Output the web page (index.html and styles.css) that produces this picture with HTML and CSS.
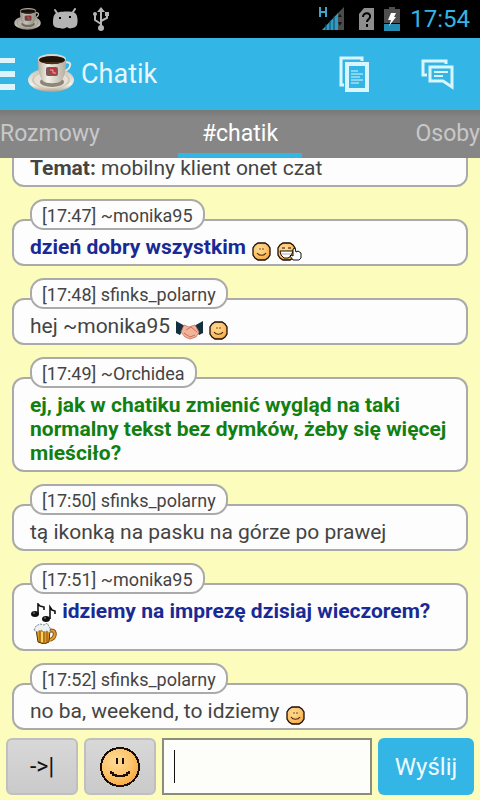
FILE: index.html
```html
<!DOCTYPE html>
<html lang="pl">
<head>
  <meta charset="utf-8">
  <meta name="viewport" content="width=device-width, initial-scale=1">
  <title>Chatik</title>
  <link rel="stylesheet" href="styles.css">
</head>
<body>
  <!-- Shared icons -->
  <svg class="sprite" width="0" height="0" aria-hidden="true">
    <defs>
      <radialGradient id="faceFill" cx="40%" cy="35%" r="70%">
        <stop offset="0" stop-color="#ffdc96"/>
        <stop offset="0.6" stop-color="#fdc36a"/>
        <stop offset="1" stop-color="#f5a43c"/>
      </radialGradient>
      <linearGradient id="cupFill">
        <stop offset="0" stop-color="#b9b2a4"/>
        <stop offset="0.35" stop-color="#f4f1e8"/>
        <stop offset="1" stop-color="#b4ac9e"/>
      </linearGradient>
      <linearGradient id="saucerFill" x2="0" y2="1">
        <stop offset="0" stop-color="#c8c0b2"/>
        <stop offset="0.7" stop-color="#f4f1e8"/>
        <stop offset="1" stop-color="#a89f90"/>
      </linearGradient>
    </defs>
    <symbol id="cup" viewBox="0 0 46 40">
      <ellipse cx="23" cy="26" rx="23" ry="12" fill="url(#saucerFill)"/>
      <ellipse cx="23" cy="26" rx="19" ry="9" fill="#cfc8b9"/>
      <ellipse cx="23" cy="26" rx="17" ry="8" fill="#e6e1d5"/>
      <ellipse cx="24" cy="28" rx="12" ry="5" fill="#8f8677"/>
      <path d="M36 9c4-2 7 0 6 3s-4 5-8 5" fill="none" stroke="#e9e4da" stroke-width="2"/>
      <path d="M10 6c0 9 1 17 5 21 3 3 15 3 18 0 4-4 5-12 5-21z" fill="url(#cupFill)"/>
      <ellipse cx="24" cy="5" rx="14" ry="5" fill="#dcd7cb"/>
      <ellipse cx="24" cy="6" rx="13" ry="4" fill="#1f130c"/>
      <path d="M14 8c5 3 15 3 20 0-5 0-15 0-20 0z" fill="#4b301e"/>
      <rect x="18" y="13" width="12" height="9" rx="2" fill="#7d5a58"/>
      <path d="M21 14h7l1 5-4 2-4-3z" fill="#c4323c"/>
      <path d="M22 16h3v3h3" fill="none" stroke="#d8b0a8"/>
    </symbol>
    <symbol id="smile" viewBox="0 0 40 40">
      <circle cx="20" cy="20" r="19" fill="url(#faceFill)" stroke="#1c0d05" stroke-width="2" shape-rendering="crispEdges"/>
      <path d="M16 11h2v6h-2zM22 11h2v6h-2z" fill="#1c0d05"/>
      <path d="M11 24v2h2v2h3v1h8v-1h3v-2h2v-2" fill="none" stroke="#1c0d05" stroke-width="2"/>
    </symbol>
    <symbol id="smileSmall" viewBox="0 0 19 19">
      <path d="M6 1h7l3 2 2 3v7l-2 3-3 2H6l-3-2-2-3V6l2-3z" fill="url(#faceFill)" stroke="#1c0d05" stroke-width="1.3"/>
      <path d="M8 6v2M11 6v2" stroke="#7a4a1c" stroke-width="1"/>
      <path d="M5 11c2 3 7 3 9 0" fill="none" stroke="#4d2a0e" stroke-width="1.2"/>
    </symbol>
  </svg>

  <div class="app">
    <div class="status-bar">
      <div class="status-group">
        <svg class="status-cup" width="27" height="23"><use href="#cup"/></svg>
        <svg width="28" height="22" viewBox="0 0 28 22">
          <path d="M4 2l4 6M24 1l-4 6" stroke="#b4b4b4" stroke-width="2" stroke-linecap="round"/>
          <path d="M4 6c3-3 17-3 20-1 3 2 3 9 2 12-1 2-3 3-5 3-2 1-4 0-5-1-2 2-6 2-7 1-4 0-7-1-7-5 0-3 0-7 2-9z" fill="#b4b4b4"/>
          <path d="M8 9h2v2H8zM18 8h2v2h-2z" fill="#000"/>
        </svg>
        <svg width="30" height="24" viewBox="0 0 30 24">
          <path d="M12 21V4M12 17l-6-4V7M12 14l6-3V7" fill="none" stroke="#b4b4b4" stroke-width="2"/>
          <path d="M12 0l4 5H8z" fill="#b4b4b4"/>
          <circle cx="12" cy="21" r="3" fill="#b4b4b4"/>
          <circle cx="6" cy="7" r="2" fill="#b4b4b4"/>
          <path d="M16 5h4v4h-4z" fill="#b4b4b4"/>
        </svg>
      </div>
      <div class="status-group">
        <svg width="30" height="24" viewBox="0 0 30 24">
          <path d="M1 0v10M7 0v10M1 5h6" fill="none" stroke="#3ba5cc" stroke-width="2"/>
          <path d="M25 0v23H18V7z" fill="#4c4c4c"/>
          <path d="M3 23L19 6v17z" fill="#2f9cc6"/>
          <path d="M7 17v6M11 13v10M15 9v14" stroke="#0b4258"/>
          <path d="M21 7l-2 3h4zM21 19l-2-4h4z" fill="#181818"/>
        </svg>
        <svg width="15" height="22" viewBox="0 0 15 22">
          <path d="M5 0h10v22H0V6z" fill="#8e8e8e"/>
          <path d="M4 9c0-5 8-5 7 0 0 2-3 2-3 5M8 16v3" fill="none" stroke="#000" stroke-width="2"/>
        </svg>
        <svg width="16" height="24" viewBox="0 0 16 24">
          <path d="M5 0h6v2h5v14H0V2h5z" fill="#4f4f4f"/>
          <path d="M0 17h16v7H0z" fill="#268bb2"/>
          <path d="M7 6h5l-2 4h2l-7 9 2-6H4z" fill="#fff"/>
        </svg>
        <span class="clock">17:54</span>
      </div>
    </div>

    <header class="action-bar">
      <button class="menu-btn" aria-label="Menu">
        <svg width="15" height="34" viewBox="0 0 15 34"><path d="M0 1h15v5H0zM0 14h15v6H0zM0 27h15v6H0z" fill="#dff3fb"/></svg>
      </button>
      <svg class="logo" width="46" height="40"><use href="#cup"/></svg>
      <h1>Chatik</h1>
      <button class="icon-btn" aria-label="Kopiuj">
        <svg width="30" height="36" viewBox="0 0 30 36" fill="none" stroke="#d9f5fd">
          <path d="M5 29H2V2h21v3" stroke-width="3"/>
          <path d="M8 8h20v26H8z" stroke-width="4"/>
          <path d="M12 15h7M12 18h12M12 21h9M12 24h12M12 27h8" stroke-width="1"/>
        </svg>
      </button>
      <button class="icon-btn" aria-label="Dymki">
        <svg width="34" height="31" viewBox="0 0 34 31" fill="none" stroke="#d9f5fd">
          <path d="M6 16H2V2h23v3" stroke-width="3"/>
          <path d="M9 8h22v20l-9-6H9z" stroke-width="3"/>
          <path d="M13 13h14M13 17h9" stroke-width="2"/>
        </svg>
      </button>
    </header>

    <nav class="tabs">
      <a class="tab" href="#rozmowy">Rozmowy</a>
      <a class="tab active" href="#chatik">#chatik</a>
      <a class="tab last" href="#osoby">Osoby</a>
    </nav>

    <main class="chat">
      <div class="message">
        <p class="bubble"><b>Temat:</b> mobilny klient onet czat</p>
      </div>

      <div class="message">
        <span class="author">[17:47] ~monika95</span>
        <p class="bubble blue">dzień dobry wszystkim
          <svg class="emote" width="19" height="19"><use href="#smileSmall"/></svg>
          <svg class="emote" width="25" height="19" viewBox="0 0 25 19">
            <path d="M6 1h7l3 2 2 3v7l-2 3-3 2H6l-3-2-2-3V6l2-3z" fill="url(#faceFill)" stroke="#1c0d05" stroke-width="1.3"/>
            <path d="M5 6h3M11 6h3" stroke="#1c0d05"/>
            <path d="M3 9h13l-2 5-3 2H7l-3-3z" fill="#fff" stroke="#1c0d05"/>
            <path d="M4 12h11" stroke="#777" stroke-width="0.6"/>
            <path d="M16 18l-3-4 1-1 2 1V7l2-1 1 4 2-1 3 2v5l-2 2z" fill="#fff" stroke="#111"/>
          </svg>
        </p>
      </div>

      <div class="message">
        <span class="author">[17:48] sfinks_polarny</span>
        <p class="bubble">hej ~monika95
          <svg class="emote" width="27" height="19" viewBox="0 0 27 19">
            <path d="M0 0l9 5-5 9-4-2zM27 0l-9 5 5 9 4-2z" fill="#12303f"/>
            <path d="M8 4l-3 7 4 5 5 2 6-2 3-5-4-7-6 2z" fill="#f4b49a" stroke="#c9705c" stroke-width="0.8"/>
            <path d="M10 9l5-3 6 5M8 12l6 4 5-2" fill="none" stroke="#c9705c"/>
          </svg>
          <svg class="emote" width="19" height="19"><use href="#smileSmall"/></svg>
        </p>
      </div>

      <div class="message">
        <span class="author">[17:49] ~Orchidea</span>
        <p class="bubble green">ej, jak w chatiku zmienić wygląd na taki normalny tekst bez dymków, żeby się więcej mieściło?</p>
      </div>

      <div class="message">
        <span class="author">[17:50] sfinks_polarny</span>
        <p class="bubble">tą ikonką na pasku na górze po prawej</p>
      </div>

      <div class="message">
        <span class="author">[17:51] ~monika95</span>
        <p class="bubble blue">
          <svg class="emote first" width="27" height="19" viewBox="0 0 27 19">
            <path d="M8 11V1l2 2 4 1v3M20 16V4l2 3 3 1v3" fill="none" stroke="#111" stroke-width="1.6"/>
            <ellipse cx="5" cy="11" rx="4" ry="3" fill="#111"/>
            <ellipse cx="16" cy="16" rx="4" ry="3" fill="#111"/>
            <path d="M3 10h2M14 15h2" stroke="#999"/>
          </svg>
          idziemy na imprezę dzisiaj wieczorem?
          <span class="emote-line">
            <svg width="27" height="21" viewBox="0 0 27 21">
              <path d="M19 8c7-3 8 6 1 9" fill="none" stroke="#7b4b10" stroke-width="4"/>
              <path d="M19 8c7-3 8 6 1 9" fill="none" stroke="#e5a02c" stroke-width="2"/>
              <path d="M6 6h14l-1 13-5 2-6-2z" fill="#e09a22" stroke="#4d300c"/>
              <path d="M10 8v11M14 8v12M17 8v11" stroke="#8a560f"/>
              <path d="M12 9v10" stroke="#ffd35c" stroke-width="2"/>
              <path d="M4 7l2-4 4-2 4 1 3-2 3 5v5l-3-2-3 1-3-2-4 2z" fill="#eef1f3" stroke="#7d8890" stroke-dasharray="2 1"/>
            </svg>
          </span>
        </p>
      </div>

      <div class="message">
        <span class="author">[17:52] sfinks_polarny</span>
        <p class="bubble">no ba, weekend, to idziemy
          <svg class="emote" width="19" height="19"><use href="#smileSmall"/></svg>
        </p>
      </div>
    </main>

    <form class="composer">
      <button type="button" class="key">-&gt;|</button>
      <button type="button" class="key" aria-label="Emotikony">
        <svg width="40" height="40"><use href="#smile"/></svg>
      </button>
      <div class="field">
        <input type="text" aria-label="Wiadomość">
        <span class="caret"></span>
      </div>
      <button type="submit" class="send">Wyślij</button>
    </form>
  </div>
</body>
</html>
```
FILE: styles.css
```css
*,
*::before,
*::after {
  box-sizing: border-box;
  margin: 0;
  padding: 0;
}

body {
  font-family: Roboto, sans-serif;
  font-size: 21px;
  line-height: 24px;
  color: #444;
  background-color: #fcfcbc;
}

button,
input {
  font-family: inherit;
  border: none;
}

svg {
  display: block;
  flex: none;
}

.sprite {
  position: absolute;
}

.app {
  display: flex;
  flex-direction: column;
  height: 100vh;
}

/* Status bar */
.status-bar {
  display: flex;
  flex: none;
  justify-content: space-between;
  align-items: center;
  height: 38px;
  padding: 0 10px 0 14px;
  background-color: #000;
}

.status-group {
  display: flex;
  align-items: center;
  gap: 10px;
}

.status-cup {
  filter: brightness(0.8);
}

.clock {
  font-size: 24px;
  color: #33b5e5;
}

/* Action bar */
.action-bar {
  display: flex;
  flex: none;
  align-items: center;
  height: 72px;
  padding-right: 9px;
  background-color: #33b5e5;
}

.action-bar h1 {
  flex: 1;
  margin-left: 7px;
  font-size: 27px;
  font-weight: 400;
  color: #e6f8fe;
}

.menu-btn {
  margin-right: 13px;
  background: none;
}

.icon-btn {
  display: flex;
  justify-content: center;
  align-items: center;
  width: 66px;
  height: 72px;
  margin-left: 18px;
  background: none;
}

/* Tabs */
.tabs {
  display: grid;
  grid-template-columns: 1fr auto 1fr;
  flex: none;
  height: 48px;
  background: linear-gradient(#787878, #868686 8px);
}

.tab {
  font-size: 23px;
  line-height: 48px;
  color: #c8c8c8;
  text-decoration: none;
}

.tab.active {
  padding: 0 24px;
  color: #fff;
  box-shadow: inset 0 -5px #33b5e5;
}

.tab.last {
  text-align: right;
}

/* Messages stick to the bottom of the list */
.chat {
  display: flex;
  flex: 1;
  flex-direction: column;
  justify-content: flex-end;
  gap: 12px;
  min-height: 0;
  padding: 0 12px;
  overflow: hidden;
}

.message {
  display: flex;
  flex: none;
  flex-direction: column;
}

.author {
  align-self: flex-start;
  z-index: 1;
  height: 31px;
  margin: 0 0 -11px 18px;
  padding: 0 10px;
  border: 2px solid #aaa;
  border-radius: 14px;
  background-color: #fdfdfd;
  font-size: 18px;
  line-height: 29px;
}

.bubble {
  padding: 14px 16px 5px;
  border: 2px solid #aaa;
  border-radius: 12px;
  background-color: #fdfdfd;
}

.blue {
  font-weight: 700;
  color: #1a2a94;
}

.green {
  font-weight: 700;
  color: #118011;
}

.emote {
  display: inline-block;
  margin: 0 0 -4px 1px;
  vertical-align: -3px;
}

.emote.first {
  margin-left: 0;
  vertical-align: 0;
}

.emote-line {
  display: block;
}

/* Composer */
.composer {
  display: flex;
  flex: none;
  gap: 6px;
  height: 70px;
  padding: 8px 6px 5px;
}

.key {
  display: flex;
  justify-content: center;
  align-items: center;
  width: 72px;
  border: 2px solid #bfbfbf;
  border-radius: 6px;
  background: linear-gradient(#d8d8d8, #cacaca);
  font-size: 23px;
  color: #111;
}

.field {
  position: relative;
  flex: 1;
}

.field input {
  width: 100%;
  height: 100%;
  padding: 0 10px;
  border: 2px solid #8c8c7c;
  background-color: #fdfdfa;
  font-size: 21px;
  caret-color: transparent;
}

.caret {
  position: absolute;
  top: 12px;
  left: 12px;
  width: 1px;
  height: 33px;
  background-color: #111;
}

.send {
  width: 96px;
  border-radius: 6px;
  background-color: #33b5e5;
  font-size: 24px;
  color: #eefaff;
}
```
